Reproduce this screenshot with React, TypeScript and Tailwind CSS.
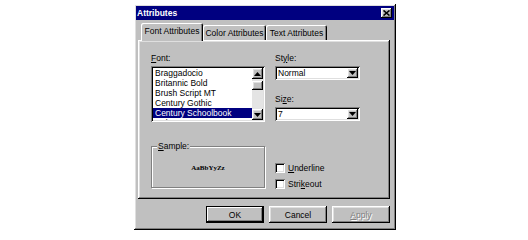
import React from 'react'

const raised =
  'shadow-[inset_-1px_-1px_#000,inset_1px_1px_#fff,inset_-2px_-2px_#808080,inset_2px_2px_#dfdfdf]'
const sunken =
  'shadow-[inset_1px_1px_#808080,inset_-1px_-1px_#fff,inset_2px_2px_#000,inset_-2px_-2px_#dfdfdf]'

const fonts = ['Braggadocio', 'Britannic Bold', 'Brush Script MT', 'Century Gothic', 'Century Schoolbook', 'Colonna MT']

const DownArrow = () => (
  <svg width="7" height="4" viewBox="0 0 7 4">
    <path d="M0 0h7L3.5 4z" fill="#000" />
  </svg>
)

const UpArrow = () => (
  <svg width="7" height="4" viewBox="0 0 7 4">
    <path d="M0 4h7L3.5 0z" fill="#000" />
  </svg>
)

const Combo = ({ value }: { value: string }) => (
  <div className={`flex h-[14px] w-[85px] items-center bg-white p-[2px] ${sunken}`}>
    <span className="flex-1 pl-[1px] leading-[10px]">{value}</span>
    <div className={`flex h-[10px] w-[11px] items-center justify-center bg-[#c0c0c0] ${raised}`}>
      <DownArrow />
    </div>
  </div>
)

const Check = ({ children }: { children: React.ReactNode }) => (
  <div className="flex h-[10px] items-center gap-[3px]">
    <div className={`h-[10px] w-[10px] bg-white ${sunken}`} />
    <span className="leading-[10px]">{children}</span>
  </div>
)

const Tab = ({ label, active, width }: { label: string; active?: boolean; width: string }) => (
  <div
    className={`flex items-center justify-center rounded-t-[2px] bg-[#c0c0c0] shadow-[inset_1px_1px_#fff,inset_-1px_0_#000,inset_-2px_0_#808080] ${width} ${
      active ? 'relative z-10 -mb-[1px] h-[18px] pb-[2px]' : 'h-[15px]'
    }`}
  >
    <span className="leading-[10px]">{label}</span>
  </div>
)

const Button = ({ children, primary, disabled }: { children: React.ReactNode; primary?: boolean; disabled?: boolean }) => (
  <div
    className={`flex h-[17px] w-[58px] items-center justify-center bg-[#c0c0c0] ${
      primary
        ? 'shadow-[inset_0_0_0_1px_#000,inset_-2px_-2px_#000,inset_2px_2px_#fff,inset_-3px_-3px_#808080]'
        : raised
    }`}
  >
    <span className={`leading-[10px] ${disabled ? 'text-[#808080] [text-shadow:1px_1px_#fff]' : ''}`}>{children}</span>
  </div>
)

export default function App() {
  return (
    <div className="h-[240px] w-[528px] bg-white pl-[134px] pt-[4px] font-['Liberation_Sans',Arial,sans-serif] text-[8.5px] text-black">
      <div className={`flex h-[226px] w-[262px] flex-col bg-[#c0c0c0] p-[2px] ${raised}`}>
        {/* Title bar */}
        <div className="flex h-[14px] items-center justify-between bg-[#000080] pl-[1px] pr-[2px]">
          <span className="text-[8.5px] font-bold leading-[10px] text-white">Attributes</span>
          <div className={`flex h-[10px] w-[11px] items-center justify-center bg-[#c0c0c0] ${raised}`}>
            <svg width="7" height="6" viewBox="0 0 7 6">
              <path d="M0.5 0.5L6.5 5.5M6.5 0.5L0.5 5.5" stroke="#000" strokeWidth="1.6" />
            </svg>
          </div>
        </div>

        {/* Tabs */}
        <div className="ml-[5px] mt-[3px] flex items-end">
          <Tab label="Font Attributes" active width="w-[62px]" />
          <Tab label="Color Attributes" width="w-[63px]" />
          <Tab label="Text Attributes" width="w-[61px]" />
        </div>

        {/* Panel */}
        <div className={`ml-[2px] flex h-[159px] w-[252px] gap-[10px] pl-[13px] pt-[13px] ${raised}`}>
          <div className="flex w-[114px] flex-col">
            <span className="h-[10px] leading-[10px]">
              <u>F</u>ont:
            </span>
            <div className={`mt-[3px] flex h-[56px] bg-white p-[2px] ${sunken}`}>
              <div className="flex-1 overflow-hidden">
                {fonts.map((f) => (
                  <div
                    key={f}
                    className={`h-[10px] whitespace-nowrap pl-[2px] leading-[10px] ${
                      f === 'Century Schoolbook' ? 'bg-[#000080] text-white' : ''
                    }`}
                  >
                    {f}
                  </div>
                ))}
              </div>
              <div className="flex w-[11px] flex-col bg-[#e4e4e4]">
                <div className={`flex h-[11px] items-center justify-center bg-[#c0c0c0] ${raised}`}>
                  <UpArrow />
                </div>
                <div className={`mt-[2px] h-[9px] bg-[#c0c0c0] ${raised}`} />
                <div className="flex-1" />
                <div className={`flex h-[11px] items-center justify-center bg-[#c0c0c0] ${raised}`}>
                  <DownArrow />
                </div>
              </div>
            </div>

            <div className="relative mt-[24px] flex h-[42px] items-center justify-center border border-[#808080] shadow-[inset_1px_1px_#fff,1px_1px_#fff]">
              <span className="absolute -top-[6px] left-[5px] bg-[#c0c0c0] px-[1px] leading-[10px]">
                <u>S</u>ample:
              </span>
              <span className="mt-[2px] font-['Liberation_Serif',serif] text-[7px] font-bold">AaBbYyZz</span>
            </div>
          </div>

          <div className="flex w-[86px] flex-col">
            <span className="h-[10px] leading-[10px]">
              St<u>y</u>le:
            </span>
            <div className="mt-[3px]">
              <Combo value="Normal" />
            </div>
            <span className="mt-[14px] h-[10px] leading-[10px]">
              Si<u>z</u>e:
            </span>
            <div className="mt-[3px]">
              <Combo value="7" />
            </div>
            <div className="mt-[42px] flex flex-col gap-[6px]">
              <Check>
                <u>U</u>nderline
              </Check>
              <Check>
                Stri<u>k</u>eout
              </Check>
            </div>
          </div>
        </div>

        {/* Buttons */}
        <div className="mr-[4px] mt-[7px] flex justify-end gap-[5px]">
          <Button primary>OK</Button>
          <Button>Cancel</Button>
          <Button disabled>
            <u>A</u>pply
          </Button>
        </div>
      </div>
    </div>
  )
}
